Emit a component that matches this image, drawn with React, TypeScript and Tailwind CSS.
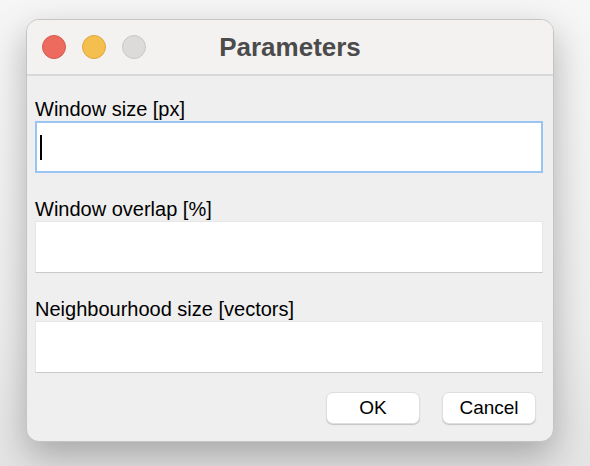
import { type FC } from 'react';

const FONT = { fontFamily: '"Liberation Sans", Arial, Helvetica, sans-serif' };

/** Traffic-light button in the title bar */
const Light: FC<{ color: string }> = ({ color }) => (
  <div className={`h-[24px] w-[24px] rounded-full border ${color}`} />
);

/** One labelled text field */
const Field: FC<{ label: string; focused?: boolean }> = ({ label, focused = false }) => (
  <div className="flex flex-col">
    <div className="h-[23px] text-[20px] leading-[23px] text-black">{label}</div>
    {focused ? (
      <div className="flex h-[52px] w-[508px] items-center border-2 border-[#99c5f3] bg-white pl-[3px]">
        <div className="h-[25px] w-[2px] bg-black" />
      </div>
    ) : (
      <div className="h-[52px] w-[508px] border border-[#e6e6e6] border-b-[#c9c9c9] bg-white" />
    )}
  </div>
);

const Button: FC<{ label: string }> = ({ label }) => (
  <button className="flex h-[32px] w-[94px] items-center justify-center rounded-[7px] border border-[#dedede] bg-white text-[19px] text-black shadow-[0_1px_1px_rgba(0,0,0,0.18)]">
    {label}
  </button>
);

export default function App() {
  return (
    <div
      className="h-[466px] w-[590px] overflow-hidden bg-[linear-gradient(180deg,#f6f6f6_0%,#eeeeee_70%,#e4e4e4_100%)] pt-[19px] pl-[26px]"
      style={FONT}
    >
      <div className="flex h-[423px] w-[528px] flex-col overflow-hidden rounded-[13px] border border-[#c4c4c4] bg-[#efefef] shadow-[0_14px_36px_rgba(0,0,0,0.28)]">
        <div className="grid h-[56px] grid-cols-[1fr_auto_1fr] items-center border-b-2 border-[#d8d8d8] bg-[#f3f2f1]">
          <div className="flex items-center gap-[16px] pl-[15px]">
            <Light color="bg-[#ec6a5e] border-[#d65a4f]" />
            <Light color="bg-[#f4bf4f] border-[#dea73c]" />
            <Light color="bg-[#dcdbda] border-[#c9c8c7]" />
          </div>
          <div className="text-[26px] font-bold text-[#4b4b4b]">Parameters</div>
          <div />
        </div>
        <div className="flex flex-col gap-[25px] pt-[22px] pl-[8px]">
          <Field label="Window size [px]" focused />
          <Field label="Window overlap [%]" />
          <Field label="Neighbourhood size [vectors]" />
        </div>
        <div className="flex justify-end gap-[22px] pt-[19px] pr-[17px]">
          <Button label="OK" />
          <Button label="Cancel" />
        </div>
      </div>
    </div>
  );
}
